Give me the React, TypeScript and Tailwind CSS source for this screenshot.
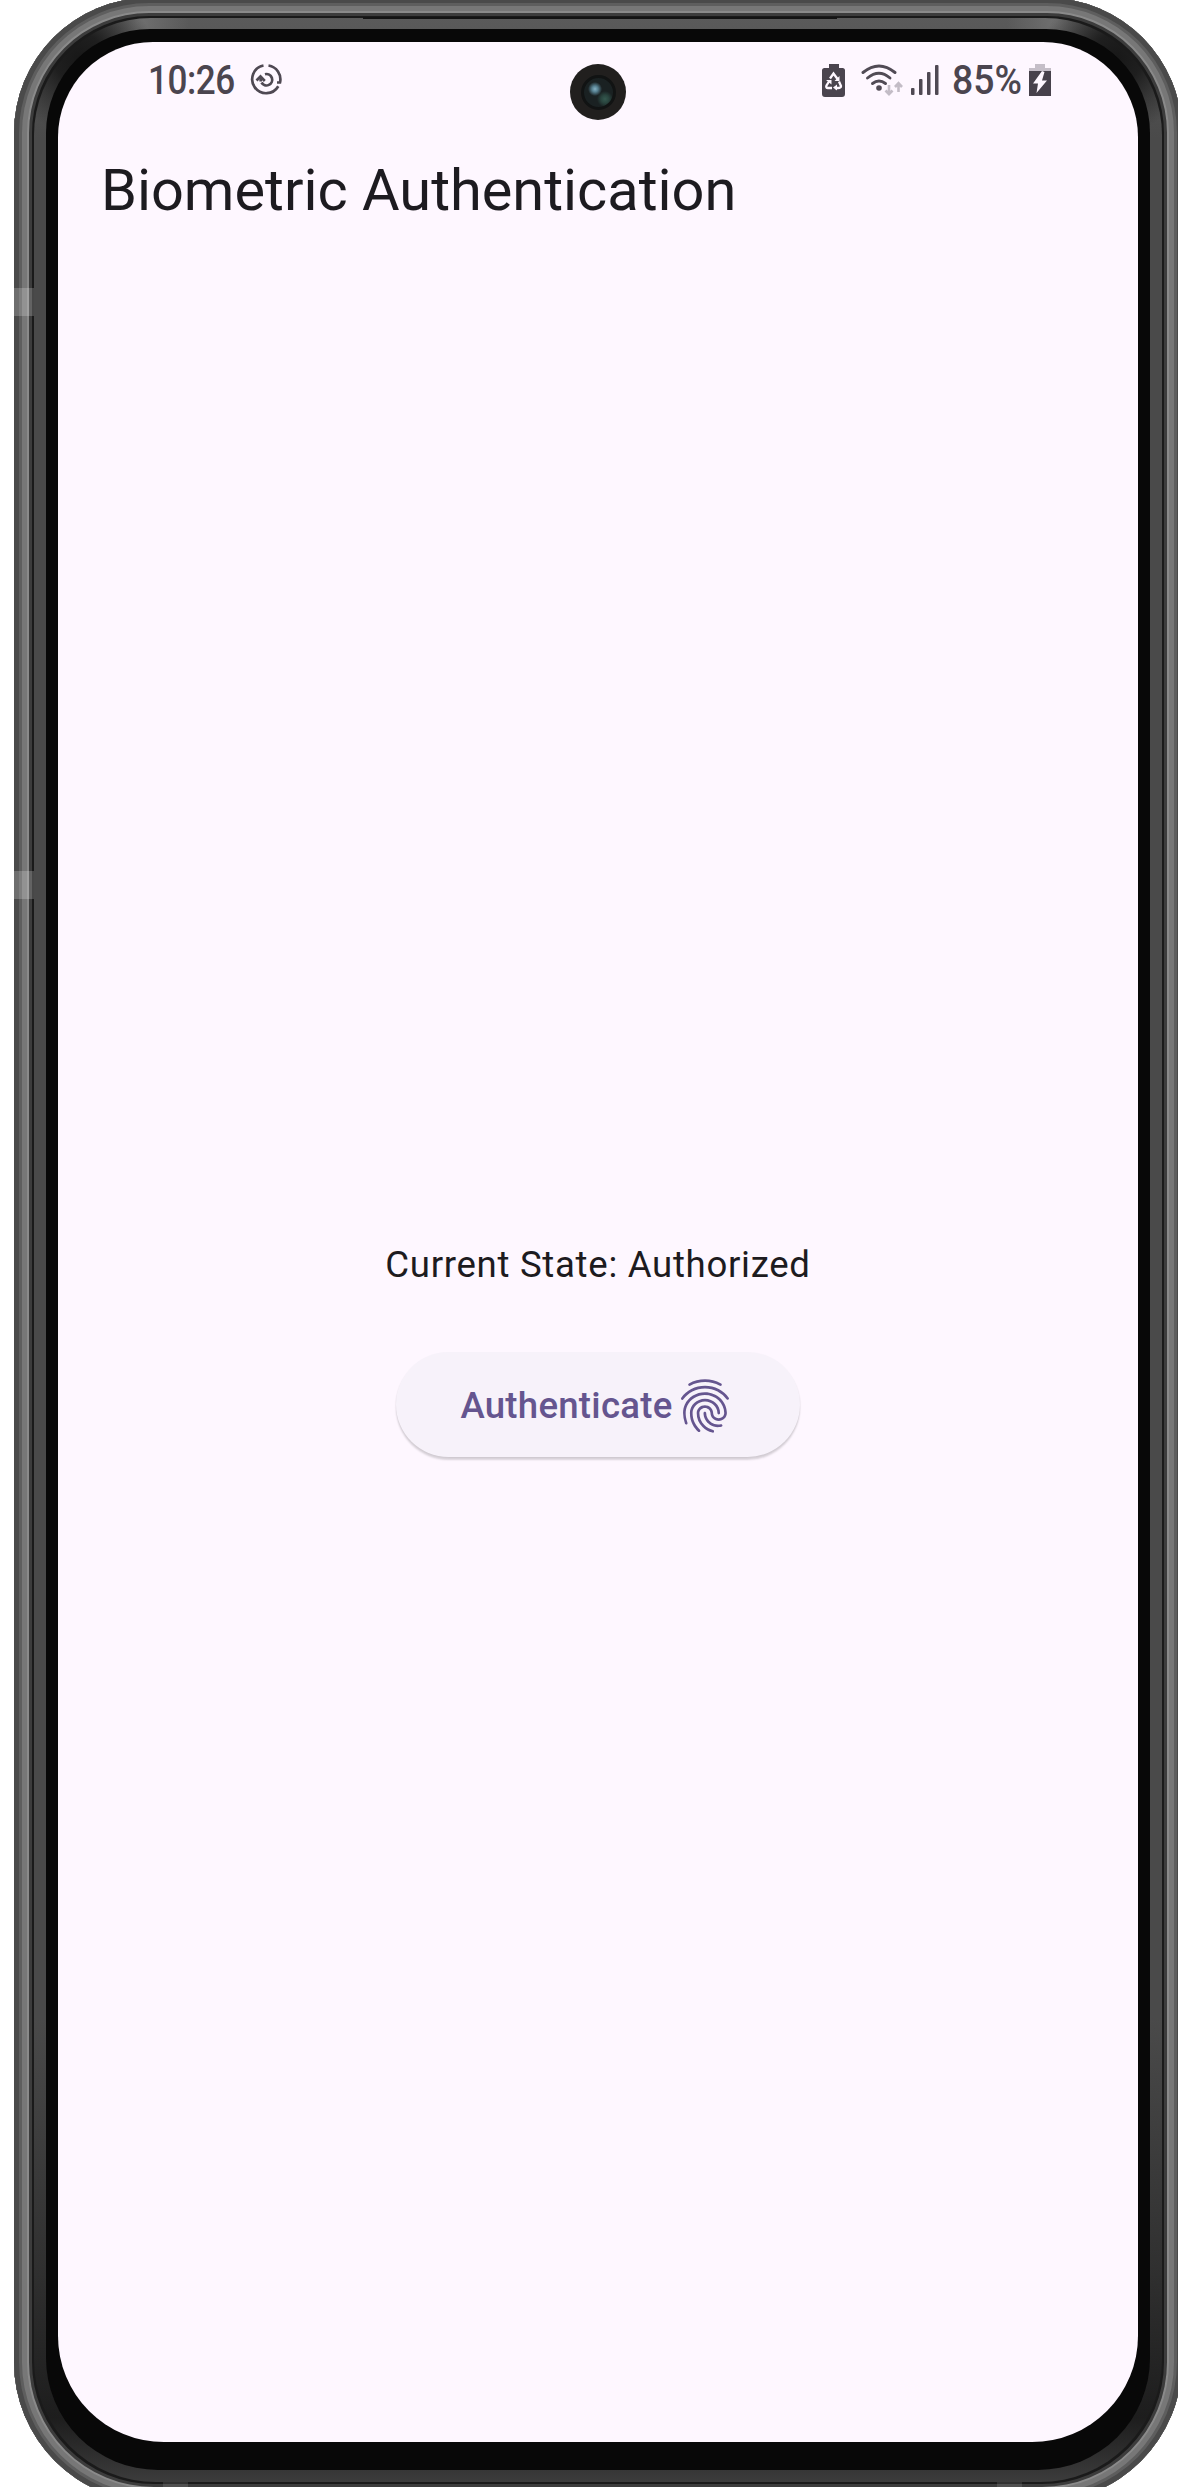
import React from "react";
import { MdFingerprint } from "react-icons/md";

function RefreshGlyph() {
  return (
    <svg className="h-8 w-8 shrink-0" viewBox="0 0 32 32" fill="none" stroke="#4f4953" strokeWidth="2.7">
      <path d="M13.500 1.500A14 14 0 1 0 28.300 22.300" />
      <path d="M18.500 1.500A14 14 0 0 1 30 18.500H27" />
      <path d="M11.500 18.500A5.700 5.700 0 1 0 15 10.200" />
      <path d="M6.500 16.500L10.500 12.500L14.800 17" />
      <path d="M10.700 13V17.500" />
    </svg>
  );
}

function RecycleBattery() {
  return (
    <svg className="h-[33px] w-[23px] shrink-0" viewBox="0 0 23 33">
      <path fill="#4a444e" d="M7 0h10v4h3.5Q23 4 23 6.500V30Q23 33 20 33H3Q0 33 0 30V6.500Q0 4 2.500 4H7z" />
      <g fill="none" stroke="#fef7ff" strokeWidth="2.300">
        <path d="M8 14.500L11.500 9.500L15.500 15" />
        <path d="M17 17.500L19 22Q19 24 16 24H13" />
        <path d="M10 24H6Q3.500 24 4.500 21.500L7 17.500" />
      </g>
      <path fill="#fef7ff" d="M17.500 12v5h-5zM15 20.500v6l-4-3zM4 16h5.500v4.500z" />
    </svg>
  );
}

function WifiGlyph() {
  return (
    <svg className="h-[33px] w-[42px] shrink-0" viewBox="0 0 42 33" fill="none" strokeWidth="2.900">
      <g stroke="#514b55" strokeLinecap="round">
        <path d="M2 8.500Q18 -4.500 34 8.500" />
        <path d="M6.500 14Q18 4.500 29 14" />
        <path d="M11.500 19.500Q18 14.500 24.500 19.500" />
      </g>
      <circle cx="18" cy="24" r="2.800" fill="#514b55" />
      <g stroke="#c3bcc6" strokeWidth="2.600">
        <path d="M28 21V30M24.500 26.500L28 30.200L31.500 26.500" />
        <path d="M37.500 28V19.500M34 23L37.500 19.200L41 23" />
      </g>
    </svg>
  );
}

function SignalGlyph() {
  return (
    <svg className="h-8 w-7 shrink-0" viewBox="0 0 28 32" fill="#4f4953">
      <rect x="0" y="24" width="3.500" height="7" rx="1" />
      <rect x="8" y="15" width="3.500" height="16" rx="1" />
      <rect x="16" y="8" width="3.500" height="23" rx="1" />
      <rect x="24" y="1" width="3.500" height="30" rx="1" />
    </svg>
  );
}

function ChargingBattery() {
  return (
    <svg className="h-[33px] w-[22px] shrink-0" viewBox="0 0 22 33">
      <path fill="#c5bec8" d="M6 0h10v4h6v5H0V4h6z" />
      <path fill="#47414b" d="M0 7h22v25H0z" />
      <path fill="#fef7ff" d="M13 7L4 19.500h5L7.500 29L18 16.500h-5L15.500 8z" />
    </svg>
  );
}

function Camera() {
  return (
    <div className="absolute left-[512px] top-[22px] flex size-14 items-center justify-center rounded-full bg-[#211f1e]">
      <div className="size-[35px] rounded-full border-[3px] border-[#111313] bg-[radial-gradient(circle_at_11px_11px,#86b2c5_0px,#568090_3px,transparent_7px),radial-gradient(circle_at_21px_21px,#35594f_0px,#29443e_4px,transparent_8px)] bg-[#1a2122]" />
    </div>
  );
}

function StatusBar() {
  return (
    <div className="flex h-20 items-start justify-between pl-[90px] pr-[87px] pt-[20px] text-[#4b454f]">
      <div className="flex items-center">
        <div className="w-[102px] whitespace-nowrap font-['Roboto'] text-[41px] font-medium leading-9 tracking-[-0.5px]">
          <div className="origin-left scale-x-[0.855]">10:26</div>
        </div>
        <RefreshGlyph />
      </div>
      <div className="flex items-center">
        <RecycleBattery />
        <div className="w-4" />
        <WifiGlyph />
        <div className="w-[8px]" />
        <SignalGlyph />
        <div className="ml-[13px] w-[77px] whitespace-nowrap font-['Roboto'] text-[41px] font-medium leading-9">
          <div className="origin-left scale-x-[0.91]">85%</div>
        </div>
        <ChargingBattery />
      </div>
    </div>
  );
}

function Screen() {
  return (
    <div className="relative flex h-[2400px] w-[1080px] flex-col overflow-hidden rounded-b-[106px] rounded-t-[95px] bg-[#fef7ff] font-['Roboto']">
      <StatusBar />
      <Camera />
      <h1 className="ml-[43px] mt-[32px] whitespace-nowrap text-[57.700px] leading-[72px] text-[#1d1b20]">
        Biometric Authentication
      </h1>
      <div className="mt-[1015px] flex flex-col items-center">
        <p className="whitespace-nowrap text-[36.600px] leading-[48px] tracking-[0.700px] text-[#1d1b20]">
          Current State: Authorized
        </p>
        <button className="mt-[63px] flex h-[105px] w-[404px] items-center justify-center rounded-full bg-[#f7f2fa] pl-px pt-[2px] text-[#65558f] shadow-[0_3px_2px_rgba(0,0,0,0.14),0_1px_2px_rgba(0,0,0,0.06)]">
          <span className="whitespace-nowrap text-[36.600px] font-medium leading-[48px] tracking-[0.270px]">
            Authenticate
          </span>
          <MdFingerprint className="size-[64px] shrink-0" />
        </button>
      </div>
    </div>
  );
}

export default function App() {
  return (
    <div className="h-[2487px] w-[1178px] overflow-hidden bg-white">
      <div className="relative -mt-[2px] ml-[14px] h-[2504px] w-[1168px] rounded-b-[140px] rounded-t-[135px] bg-[#1a1a1a] p-5 shadow-[inset_0_0_0_5px_#4a4a4a,inset_0_0_0_8px_#5e5e5e,inset_0_0_0_13px_#777777,inset_0_0_0_15px_#8a8a8a,inset_0_0_0_18px_#3c3c3c]">
        <div className="h-[2464px] w-[1128px] rounded-b-[122px] rounded-t-[117px] bg-[#4a4a4a] bg-[radial-gradient(circle_at_45px_40px,#181818_0px,#1f1f1f_25px,transparent_75px),radial-gradient(circle_at_1083px_40px,#181818_0px,#1f1f1f_25px,transparent_75px),radial-gradient(circle_at_105px_4px,#707070_0px,transparent_50px),radial-gradient(circle_at_1023px_4px,#707070_0px,transparent_50px),linear-gradient(#5a5a5a_0px,#4a4a4a_120px,#4a4a4a_2000px,#303030_2250px,#1d1d1d_2400px,#3c3c3c_2464px)] px-3 pt-[11px]">
          <div className="h-[2441px] w-[1104px] rounded-b-[112px] rounded-t-[104px] bg-[#080808] px-3 pt-[13px]">
            <Screen />
          </div>
        </div>
        <div className="absolute left-[349px] top-[19px] h-[2px] w-[474px] bg-[#141414]" />
        <div className="absolute left-0 top-[290px] h-7 w-5 bg-white/20" />
        <div className="absolute left-0 top-[873px] h-7 w-5 bg-white/20" />
        <div className="absolute bottom-0 left-[149px] h-5 w-[25px] bg-white/10" />
        <div className="absolute bottom-0 left-[983px] h-5 w-[25px] bg-white/10" />
      </div>
    </div>
  );
}
